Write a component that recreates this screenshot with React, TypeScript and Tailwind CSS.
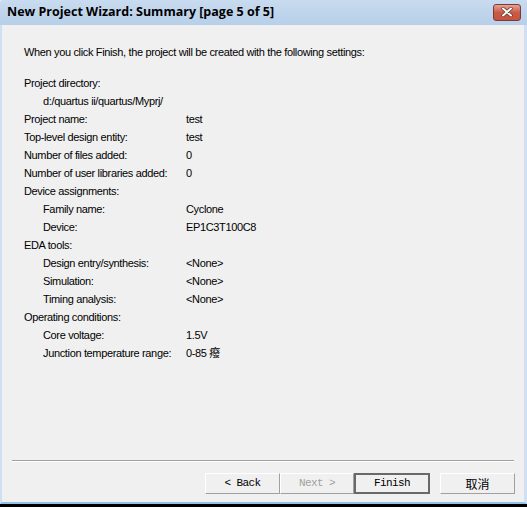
const rows: { label: string; value?: string; indent?: boolean }[] = [
  { label: "Project directory:" },
  { label: "d:/quartus ii/quartus/Myprj/", indent: true },
  { label: "Project name:", value: "test" },
  { label: "Top-level design entity:", value: "test" },
  { label: "Number of files added:", value: "0" },
  { label: "Number of user libraries added:", value: "0" },
  { label: "Device assignments:" },
  { label: "Family name:", value: "Cyclone", indent: true },
  { label: "Device:", value: "EP1C3T100C8", indent: true },
  { label: "EDA tools:" },
  { label: "Design entry/synthesis:", value: "<None>", indent: true },
  { label: "Simulation:", value: "<None>", indent: true },
  { label: "Timing analysis:", value: "<None>", indent: true },
  { label: "Operating conditions:" },
  { label: "Core voltage:", value: "1.5V", indent: true },
  { label: "Junction temperature range:", value: "0-85 癈", indent: true },
];

function WinButton({
  children,
  disabled,
  primary,
  cjk,
  className,
}: {
  children: React.ReactNode;
  disabled?: boolean;
  primary?: boolean;
  cjk?: boolean;
  className?: string;
}) {
  return (
    <div
      className={
        "h-[21px] flex items-center justify-center bg-[#f0f0f0] " +
        (primary
          ? "border-2 border-[#696969] "
          : "border border-t-white border-l-white border-r-[#a0a0a0] border-b-[#a0a0a0] ") +
        (disabled ? "text-[#a0a0a0] " : "text-black ") +
        (cjk
          ? "font-['Noto_Sans_CJK_SC',sans-serif] text-[12px] "
          : "font-['Liberation_Mono',monospace] text-[11px] tracking-[-0.6px] ") +
        (className ?? "")
      }
    >
      {children}
    </div>
  );
}

export default function App() {
  return (
    <div className="w-[527px] h-[507px] flex flex-col bg-[#f0f0f0] overflow-hidden">
      <div className="h-[25px] flex items-center justify-between pl-[7px] pr-[6px] bg-gradient-to-b from-[#c8dbef] to-[#b7cfe9] rounded-tl-[3px]">
        <span className="font-['Open_Sans',sans-serif] font-bold text-[12.5px] text-black leading-none">
          New Project Wizard: Summary [page 5 of 5]
        </span>
        <div className="w-[28px] h-[17px] mt-[-1px] rounded-[3px] border border-[#7a3b36] bg-gradient-to-b from-[#e8a293] via-[#c85a47] to-[#c7533d] flex items-center justify-center">
          <svg width="12" height="10" viewBox="0 0 12 10">
            <path d="M2 1.5 L10 8.5 M10 1.5 L2 8.5" stroke="#5a2a22" strokeWidth="3.2" strokeLinecap="round" />
            <path d="M2 1.5 L10 8.5 M10 1.5 L2 8.5" stroke="#ffffff" strokeWidth="2" strokeLinecap="round" />
          </svg>
        </div>
      </div>

      <div className="flex-1 flex flex-col border-l-2 border-l-[#cfe0f2] border-r-[3px] border-r-[#cfe0f2] border-b-2 border-b-[#8fc3e8] font-['Liberation_Sans',sans-serif] text-[11px] tracking-[-0.35px] text-black">
        <div className="pl-[22px] pt-[18px]">
          <div className="h-[18px] leading-[18px]">
            When you click Finish, the project will be created with the following settings:
          </div>
          <div className="mt-[13px] flex flex-col">
            {rows.map((r, i) => (
              <div key={i} className="h-[18px] leading-[18px] flex whitespace-nowrap">
                <div className={"w-[162px] " + (r.indent ? "pl-[19px]" : "")}>{r.label}</div>
                {r.value && (
                  <div className="font-['Liberation_Sans','Noto_Sans_CJK_SC',sans-serif]">{r.value}</div>
                )}
              </div>
            ))}
          </div>
        </div>

        <div className="mt-auto tracking-normal">
          <div className="mx-[10px] h-[2px] border-t border-t-[#a0a0a0] border-b border-b-white" />
          <div className="flex justify-end pr-[9px] pt-[11px] pb-[8px]">
            <WinButton className="w-[75px]">&lt; Back</WinButton>
            <WinButton disabled className="w-[74px]">Next &gt;</WinButton>
            <WinButton primary className="w-[76px]">Finish</WinButton>
            <WinButton cjk className="w-[75px] ml-[10px]">取消</WinButton>
          </div>
        </div>
      </div>
      <div className="h-[3px] bg-black" />
    </div>
  );
}
